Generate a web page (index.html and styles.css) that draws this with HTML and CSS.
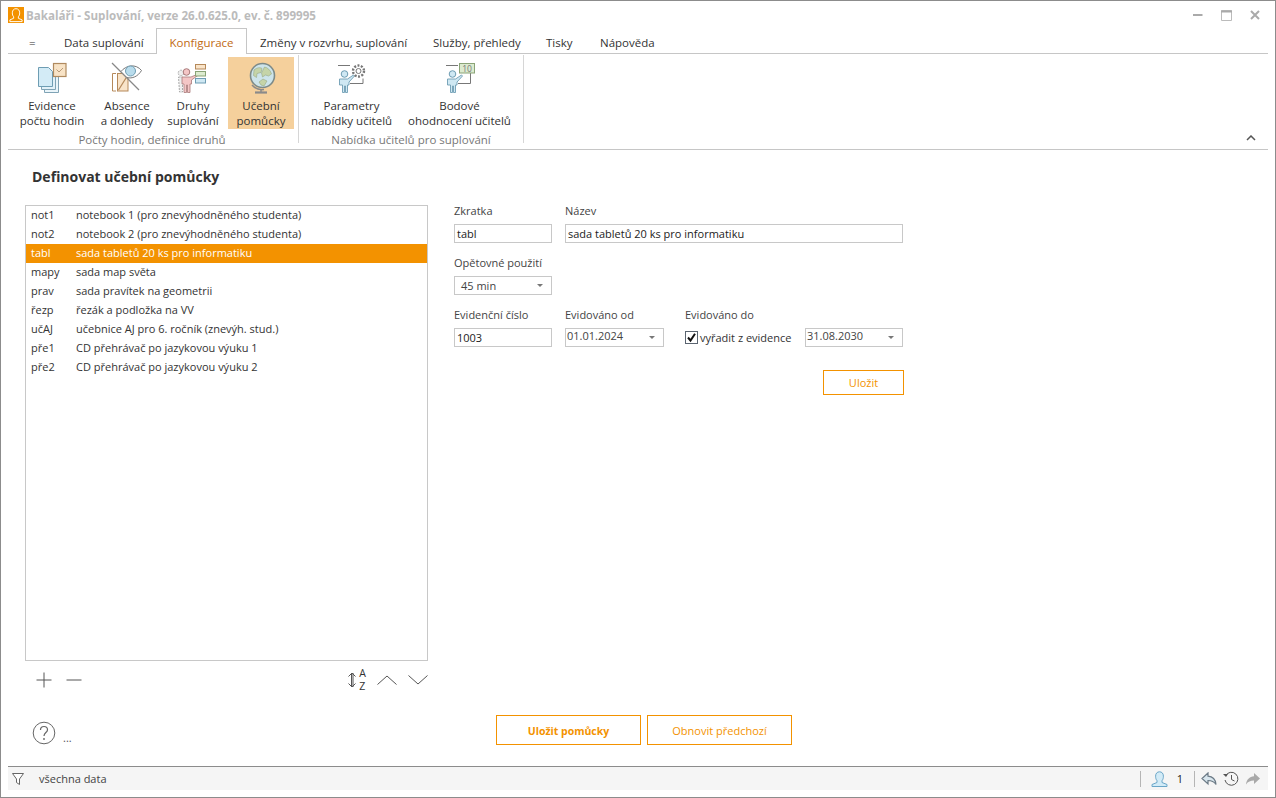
FILE: index.html
```html
<!DOCTYPE html>
<html lang="cs">
<head>
  <meta charset="UTF-8">
  <title>Bakaláři - Suplování</title>
  <link rel="stylesheet" href="styles.css">
</head>
<body>
  <div class="window">
    <div class="titlebar">
      <svg class="app-icon" width="16" height="16" viewBox="0 0 17 17">
        <rect width="17" height="17" fill="#f39200"/>
        <path d="M2 15.500v-1.800l4-1.700v-1.600C5 9.400 4.600 8 4.600 6.200 4.600 3.500 6.200 1.800 8.500 1.800s3.900 1.700 3.900 4.400c0 1.800-.4 3.200-1.400 4.200V12l4 1.700v1.800z" fill="none" stroke="#fff" stroke-width="1"/>
      </svg>
      <div class="title">Bakaláři - Suplování, verze 26.0.625.0, ev. č. 899995</div>
      <div class="win-buttons">
        <svg width="10" height="10" viewBox="0 0 10 10"><path d="M0 5h9.500" stroke="#aaa" stroke-width="2"/></svg>
        <svg width="11" height="11" viewBox="0 0 11 11"><path d="M.5.500h10v10H.5z" fill="none" stroke="#bbb"/><path d="M0 1.500h11" stroke="#aaa" stroke-width="2"/></svg>
        <svg width="10" height="10" viewBox="0 0 10 10"><path d="M1 1l8 8M9 1L1 9" stroke="#aaa" stroke-width="2"/></svg>
      </div>
    </div>

    <div class="tabs">
      <div class="tab tab-menu">=</div>
      <div class="tab tab-data">Data suplování</div>
      <div class="tab active">Konfigurace</div>
      <div class="tab tab-changes">Změny v rozvrhu, suplování</div>
      <div class="tab tab-services">Služby, přehledy</div>
      <div class="tab tab-prints">Tisky</div>
      <div class="tab tab-help">Nápověda</div>
    </div>

    <div class="ribbon">
      <div class="group group-first">
        <div class="group-items">
          <div class="rb rb-evidence">
            <svg width="34" height="34" viewBox="0 0 34 34">
              <path d="M9.500 11v19.500h14V14" fill="#eaf5fa" stroke="#7fa3b5"/>
              <path d="M6.500 8v19.500h14V11" fill="#e2f1f8" stroke="#7fa3b5"/>
              <path d="M3.500 5.500h10l4 4v15h-14z" fill="#d3ebf6" stroke="#6e9db3"/>
              <rect x="18.500" y="1.500" width="12.500" height="13" fill="#f8e3c6" stroke="#b08a5f" stroke-width="1.200"/>
              <path d="M21.500 7.500l2.500 2.500 4-4" fill="none" stroke="#b89a78"/>
            </svg>
            <span>Evidence<br>počtu hodin</span>
          </div>
          <div class="rb rb-absence">
            <svg width="34" height="34" viewBox="0 0 34 34">
              <path d="M6 11.500H2.500v17.500H6" fill="none" stroke="#b5895a"/>
              <rect x="7.500" y="11.500" width="10.500" height="17.500" fill="#f9e4c9" stroke="#b5895a"/>
              <path d="M8.500 28l10-16" stroke="#b5895a" stroke-width="1.200"/>
              <path d="M11 9.500C16 3 26 1.500 31.500 8.500 28 14.500 22 17 17 15.500" fill="#fff" stroke="#777"/>
              <circle cx="20.500" cy="9" r="5" fill="#b9dcec" stroke="#6e9db3"/>
              <path d="M2 1l27 27" stroke="#888" stroke-width="1.300"/>
            </svg>
            <span>Absence<br>a dohledy</span>
          </div>
          <div class="rb rb-kinds">
            <svg width="34" height="34" viewBox="0 0 34 34">
              <circle cx="5" cy="11" r="2.800" fill="#eee" stroke="#aaa" stroke-dasharray="2 1"/>
              <path d="M2.500 15h4v15h-3z" fill="#eee" stroke="#aaa" stroke-dasharray="2 1"/>
              <circle cx="10.500" cy="10" r="3.300" fill="#f4c6c6" stroke="#a87a7a"/>
              <path d="M6 15h9l7-3 .5 1-7 5v4h-1.500v8.500h-2.500V23h-1v7.500H8V22H6z" fill="#f4c6c6" stroke="#a87a7a" stroke-width=".8"/>
              <rect x="19.500" y="2.500" width="10" height="4.500" fill="#f9e4c9" stroke="#b5895a"/>
              <rect x="19.500" y="9.500" width="10" height="4.500" fill="#dcebcf" stroke="#8aa377"/>
              <rect x="19.500" y="16.500" width="10" height="4.500" fill="#cfe8f3" stroke="#6e9db3"/>
            </svg>
            <span>Druhy<br>suplování</span>
          </div>
          <div class="rb rb-aids on">
            <svg width="34" height="34" viewBox="0 0 34 34">
              <circle cx="18.500" cy="13.500" r="12" fill="#cde4ea" stroke="#7d8a88" stroke-width="1.600"/>
              <path d="M10 8c3-2.500 6-3 8-1.500l-1 4-4 1-.5 4-3-2zM20.500 5c3 .5 6 3 7 7l-3 2-3-1-3 2-1-4zM15 20l4-3 4 2-3 5-3-1z" fill="#c5d4a8" stroke="#8e9f78" stroke-width=".5"/>
              <path d="M8 23c3 3.500 8 5 12 4.500M17 28v2" fill="none" stroke="#8a8a8a" stroke-width="1.500"/>
              <path d="M11 30.500h12" stroke="#8a8a8a" stroke-width="2.200"/>
            </svg>
            <span>Učební<br>pomůcky</span>
          </div>
        </div>
        <div class="group-name">Počty hodin, definice druhů</div>
      </div>
      <div class="group group-second">
        <div class="group-items">
          <div class="rb rb-params">
            <svg width="34" height="34" viewBox="0 0 34 34">
              <path d="M3 3.500h12M15 21.500h13v-5" fill="none" stroke="#777"/>
              <circle cx="9.500" cy="12" r="3.300" fill="#cfe8f3" stroke="#6e9db3"/>
              <path d="M4.500 17h8l6-4 1 1-5.500 6v3h-1.500v7.500h-2V24h-1v6.500h-2V23H4.500z" fill="#cfe8f3" stroke="#6e9db3" stroke-width=".9"/>
              <circle cx="23.500" cy="9" r="2.500" fill="none" stroke="#777"/>
              <circle cx="23.500" cy="9" r="5.500" fill="none" stroke="#777" stroke-width="2.400" stroke-dasharray="2 1.460"/>
            </svg>
            <span>Parametry<br>nabídky učitelů</span>
          </div>
          <div class="rb rb-points">
            <svg width="34" height="34" viewBox="0 0 34 34">
              <path d="M3 3.500h12M15 21.500h12.500V11" fill="none" stroke="#777"/>
              <circle cx="9.500" cy="12" r="3.300" fill="#cfe8f3" stroke="#6e9db3"/>
              <path d="M4.500 17h8l6-4 1 1-5.500 6v3h-1.500v7.500h-2V24h-1v6.500h-2V23H4.500z" fill="#cfe8f3" stroke="#6e9db3" stroke-width=".9"/>
              <rect x="16.500" y="1.500" width="15" height="9.500" fill="#dcebcf" stroke="#8aa377"/>
              <text x="24" y="9.500" class="ten">10</text>
            </svg>
            <span>Bodové<br>ohodnocení učitelů</span>
          </div>
        </div>
        <div class="group-name">Nabídka učitelů pro suplování</div>
      </div>
      <svg class="collapse" width="10" height="6" viewBox="0 0 10 6"><path d="M1 5l4-4 4 4" fill="none" stroke="#555" stroke-width="1.500"/></svg>
    </div>

    <div class="content">
      <h1>Definovat učební pomůcky</h1>
      <div class="columns">
        <div class="left">
          <div class="list" id="aidList"></div>
          <div class="list-tools">
            <div class="tools-group">
              <svg width="16" height="16" viewBox="0 0 16 16"><path d="M8 .5v15M.5 8h15" stroke="#555"/></svg>
              <svg width="16" height="16" viewBox="0 0 16 16"><path d="M.5 8h15" stroke="#555"/></svg>
            </div>
            <div class="tools-group tools-sort">
              <div class="sort">
                <svg width="10" height="16" viewBox="0 0 10 16"><path d="M4.500 1v14M6 1v14M1.500 4.500L5 1l3.500 3.500M1.500 11.500L5 15l3.500-3.500" fill="none" stroke="#555"/></svg>
                <div class="az"><span>A</span><span>Z</span></div>
              </div>
              <svg width="20" height="10" viewBox="0 0 20 10"><path d="M.5 9.500L10 1l9.500 8.500" fill="none" stroke="#555"/></svg>
              <svg width="20" height="10" viewBox="0 0 20 10"><path d="M.5.500L10 9l9.500-8.500" fill="none" stroke="#555"/></svg>
            </div>
          </div>
        </div>

        <div class="form">
          <div class="form-row">
            <div class="field w-short"><label>Zkratka</label><div class="input dark">tabl</div></div>
            <div class="field w-name"><label>Název</label><div class="input dark">sada tabletů 20 ks pro informatiku</div></div>
          </div>
          <div class="form-row">
            <div class="field w-short"><label>Opětovné použití</label><div class="input combo-time">45 min<i class="caret"></i></div></div>
          </div>
          <div class="form-row">
            <div class="field w-short"><label>Evidenční číslo</label><div class="input dark">1003</div></div>
            <div class="field w-date"><label>Evidováno od</label><div class="input date">01.01.2024<i class="caret"></i></div></div>
            <div class="field w-end">
              <label>Evidováno do</label>
              <div class="end-row">
                <div class="check">
                  <svg width="13" height="13" viewBox="0 0 13 13"><rect x=".5" y=".5" width="12" height="12" fill="#fff" stroke="#5a6470"/><path d="M3 6.500l2.500 3L10 2.800" fill="none" stroke="#111" stroke-width="2"/></svg>
                  <span>vyřadit z evidence</span>
                </div>
                <div class="input date w-short">31.08.2030<i class="caret"></i></div>
              </div>
            </div>
          </div>
          <div class="form-save"><button class="btn btn-save">Uložit</button></div>
        </div>
      </div>

      <div class="footer">
        <div class="help">
          <svg width="24" height="24" viewBox="0 0 24 24"><circle cx="12" cy="12" r="10.800" fill="none" stroke="#666"/><path d="M8.500 9c0-2.200 1.500-3.500 3.500-3.500s3.500 1.300 3.500 3.200c0 2.800-3.500 3-3.500 6.300" fill="none" stroke="#666" stroke-width="1.200"/><circle cx="12" cy="18" r=".9" fill="#666"/></svg>
          <span>...</span>
        </div>
        <div class="footer-buttons">
          <button class="btn btn-main"><b>Uložit pomůcky</b></button>
          <button class="btn btn-main">Obnovit předchozí</button>
        </div>
      </div>
    </div>

    <div class="statusbar">
      <svg class="filter" width="12" height="12" viewBox="0 0 12 12"><path d="M.5.500h11L7.500 6v5.500l-3-2V6z" fill="#fff" stroke="#666"/></svg>
      <span class="status-text">všechna data</span>
      <div class="status-right">
        <i class="status-sep"></i>
        <svg class="status-user" width="17" height="16" viewBox="0 0 17 16"><path d="M1 15.500v-2l5-2v-1.800C5 8.500 4.600 7 4.600 5.200 4.600 2.400 6.200.8 8.500.8s3.900 1.600 3.900 4.400c0 1.800-.4 3.300-1.400 4.500v1.800l5 2v2z" fill="#d2ebf7" stroke="#6aa6c8"/></svg>
        <span class="user-count">1</span>
        <i class="status-sep"></i>
        <svg width="16" height="14" viewBox="0 0 16 14"><path d="M7 1L1 6.500 7 12V8.500c3.500 0 6 1 8 4-.5-5-3.500-8-8-8.300z" fill="#d8e6ee" stroke="#6b7a86" stroke-width="1.200"/></svg>
        <svg width="16" height="16" viewBox="0 0 16 16"><path d="M2.500 5A6.500 6.500 0 1 1 2 9" fill="none" stroke="#555"/><path d="M0 3l3 3 2-3z" fill="#555"/><path d="M8.500 4v4.500l3 1.500" fill="none" stroke="#555"/></svg>
        <svg width="16" height="14" viewBox="0 0 16 14"><path d="M9 1l6 5.500L9 12V8.500c-3.500 0-6 1-8 4 .5-5 3.500-8 8-8.300z" fill="#a9a9a9"/></svg>
      </div>
    </div>
  </div>

  <script>
    const aids = [
      ["not1", "notebook 1 (pro znevýhodněného studenta)"],
      ["not2", "notebook 2 (pro znevýhodněného studenta)"],
      ["tabl", "sada tabletů 20 ks pro informatiku"],
      ["mapy", "sada map světa"],
      ["prav", "sada pravítek na geometrii"],
      ["řezp", "řezák a podložka na VV"],
      ["učAJ", "učebnice AJ pro 6. ročník (znevýh. stud.)"],
      ["pře1", "CD přehrávač po jazykovou výuku 1"],
      ["pře2", "CD přehrávač po jazykovou výuku 2"]
    ];

    const list = document.getElementById("aidList");
    aids.forEach(function (aid, i) {
      const row = document.createElement("div");
      row.className = i === 2 ? "row selected" : "row";
      row.innerHTML = "<span class='code'>" + aid[0] + "</span><span>" + aid[1] + "</span>";
      list.appendChild(row);
    });
  </script>
</body>
</html>
```
FILE: styles.css
```css
* {
  box-sizing: border-box;
}
body {
  margin: 0;
  font-family: "Open Sans", "Noto Sans", Arial, sans-serif;
  font-size: 11px;
  color: #333;
  background-color: white;
}
.window {
  display: flex;
  flex-direction: column;
  height: 798px;
  border: 1px solid #8c8c8c;
  overflow: hidden;
}
.titlebar {
  display: flex;
  align-items: center;
  height: 27px;
  padding: 1px 0 0 7px;
  flex-shrink: 0;
}
.title {
  margin-left: 2px;
  font-weight: bold;
  font-size: 11.6px;
  color: #bbb;
}
.win-buttons {
  display: flex;
  align-items: center;
  gap: 18px;
  margin-left: auto;
  padding-right: 15px;
}
.tabs {
  display: flex;
  height: 26px;
  margin: 0 7px;
  border-bottom: 1px solid #c6c6c6;
  flex-shrink: 0;
}
.tab {
  padding-top: 7px;
  font-size: 11.5px;
  line-height: 15px;
  color: #333;
}
.tab-menu {
  width: 33px;
  padding-left: 21px;
}
.tab-data {
  width: 115px;
  padding-left: 23px;
}
.tab.active {
  width: 91px;
  height: 26px;
  padding-top: 6px;
  text-align: center;
  color: #bf6a14;
  background-color: white;
  border: 1px solid #c6c6c6;
  border-bottom: none;
}
.tab-changes {
  width: 173px;
  padding-left: 13px;
}
.tab-services {
  width: 113px;
  padding-left: 13px;
}
.tab-prints {
  width: 54px;
  padding-left: 13px;
}
.tab-help {
  padding-left: 13px;
}
.ribbon {
  position: relative;
  display: flex;
  height: 96px;
  margin: 0 7px;
  border-bottom: 1px solid #c6c6c6;
  flex-shrink: 0;
}
.group {
  display: flex;
  flex-direction: column;
  height: 88px;
  margin-top: 1px;
  padding-top: 2px;
  border-right: 1px solid #d6d6d6;
}
.group-first {
  width: 291px;
  padding-right: 2px;
}
.group-second {
  width: 225px;
}
.group-items {
  display: flex;
  height: 73px;
  flex-shrink: 0;
}
.group-name {
  margin-top: 2px;
  text-align: center;
  font-size: 11.5px;
  line-height: 15px;
  color: #777;
}
.rb {
  display: flex;
  flex-direction: column;
  align-items: center;
  height: 72px;
  padding-top: 5px;
  text-align: center;
  font-size: 11.5px;
  line-height: 15px;
  color: #333;
}
.rb svg {
  display: block;
  margin-bottom: 2px;
}
.rb-evidence {
  width: 78px;
  margin-left: 5px;
}
.rb-absence {
  width: 72px;
}
.rb-kinds {
  width: 60px;
}
.rb-aids {
  width: 66px;
  margin-left: 5px;
}
.rb.on {
  background-color: #f5d09c;
}
.rb-params {
  width: 105px;
}
.rb-points {
  width: 111px;
}
.ten {
  font-size: 8.5px;
  fill: #777;
  text-anchor: middle;
}
.collapse {
  position: absolute;
  right: 12px;
  bottom: 8px;
}
.content {
  display: flex;
  flex-direction: column;
  flex: 1;
  padding: 0 24px;
}
h1 {
  margin: 17px 0 0 7px;
  font-size: 14px;
  line-height: 19px;
  font-weight: bold;
  color: #333;
}
.columns {
  display: flex;
  margin-top: 19px;
}
.left {
  width: 403px;
}
.list {
  height: 456px;
  border: 1px solid #c8c8c8;
}
.row {
  display: flex;
  height: 19px;
  padding: 0 0 2px 5px;
  align-items: center;
  font-size: 11px;
  color: #333;
}
.row.selected {
  color: white;
  background-color: #f39200;
}
.code {
  width: 45px;
}
.list-tools {
  display: flex;
  justify-content: space-between;
  align-items: center;
  height: 20px;
  margin-top: 9px;
  padding-left: 11px;
}
.tools-group {
  display: flex;
  align-items: center;
  gap: 14px;
}
.tools-sort {
  gap: 11px;
}
.sort {
  display: flex;
  align-items: center;
  gap: 2px;
}
.az {
  display: flex;
  flex-direction: column;
  font-size: 10.5px;
  line-height: 13px;
}
.form {
  width: 451px;
  margin: -1px 0 0 26px;
}
.form-row {
  display: flex;
  gap: 13px;
  margin-bottom: 13px;
}
.field label {
  display: block;
  height: 20px;
  font-size: 11px;
  line-height: 13px;
  color: #444;
}
.w-short {
  width: 98px;
}
.w-name {
  width: 338px;
}
.w-date {
  width: 99px;
  margin-right: 8px;
}
.w-end {
  width: 218px;
}
.input {
  position: relative;
  height: 19px;
  padding: 0 2px;
  border: 1px solid #c8c8c8;
  font-size: 11px;
  line-height: 17px;
  color: #444;
}
.input.dark {
  color: #222;
}
.input.date {
  padding-left: 1px;
  line-height: 14px;
}
.combo-time {
  padding-left: 6px;
}
.caret {
  position: absolute;
  right: 8px;
  top: 7px;
  width: 0;
  height: 0;
  border-left: 3px solid transparent;
  border-right: 3px solid transparent;
  border-top: 3px solid #777;
}
.end-row {
  display: flex;
  align-items: center;
}
.check {
  display: flex;
  align-items: center;
  gap: 2px;
  width: 120px;
  font-size: 11px;
  color: #333;
}
.check svg {
  flex-shrink: 0;
}
.form-save {
  display: flex;
  justify-content: flex-end;
  width: 450px;
  margin-top: 23px;
}
.btn {
  padding: 0;
  font-family: inherit;
  font-size: 11px;
  color: #f39200;
  background-color: white;
  border: 1px solid #f39200;
}
.btn-save {
  width: 81px;
  height: 25px;
}
.footer {
  position: relative;
  margin-top: 25px;
}
.help {
  position: absolute;
  left: 7px;
  top: 6px;
  display: flex;
  align-items: flex-end;
  gap: 7px;
  color: #555;
}
.footer-buttons {
  display: flex;
  gap: 6px;
  margin-left: 471px;
}
.btn-main {
  width: 145px;
  height: 30px;
}
.btn-main b {
  font-size: 10.5px;
}
.statusbar {
  display: flex;
  align-items: center;
  height: 24px;
  margin: 0 7px 7px;
  padding: 0 4px;
  background-color: #f5f5f5;
  border-top: 1px solid #8c8c8c;
  flex-shrink: 0;
}
.status-text {
  margin: 0 0 1px 15px;
  font-size: 11px;
  color: #444;
}
.status-right {
  display: flex;
  align-items: center;
  gap: 6px;
  margin-left: auto;
  padding-right: 3px;
}
.status-sep {
  width: 1px;
  height: 16px;
  background-color: #b5b5b5;
}
.status-user {
  margin-left: 4px;
}
.user-count {
  margin: 0 5px 0 3px;
  color: #222;
}
```
